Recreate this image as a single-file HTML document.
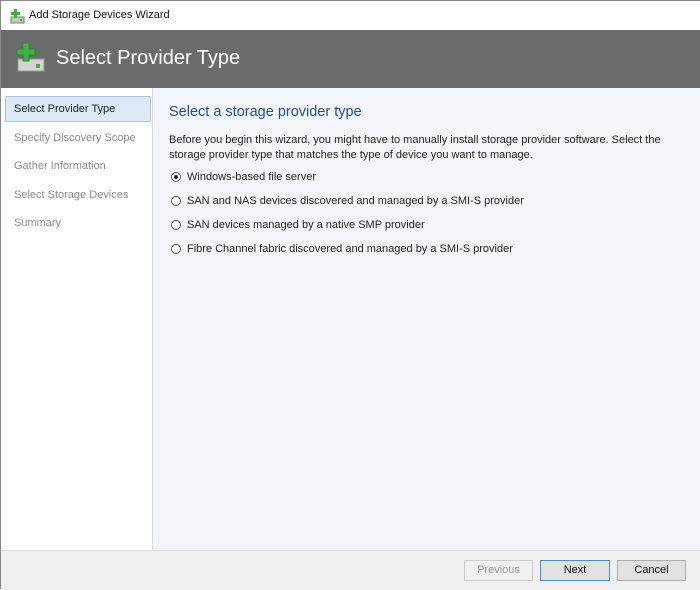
<!DOCTYPE html>
<html><head><style>
*{margin:0;padding:0;box-sizing:border-box}
body{width:700px;height:589px;overflow:hidden;font-family:"Liberation Sans",sans-serif;font-size:11px;background:#fff;position:relative;border:1px solid #888}
.abs{position:absolute}
.title{left:0;top:0;width:700px;height:29px;background:#fff}
.hdr{left:0;top:29px;width:700px;height:58px;background:#6b6b6b}
.left{left:0;top:87px;width:152px;height:462px;background:#fff;border-right:1px solid #d5d9de}
.main{left:153px;top:87px;width:547px;height:462px;background:#f2f5f9}
.foot{left:0;top:549px;width:700px;height:40px;background:#f0f0f0;border-top:1px solid #dcdcdc}
.nav{left:13px;color:#8a8a8a;font-size:11px}
.sel{left:4px;top:95px;width:146px;height:26px;background:#dde9f6;border:1px solid #a9c6e6;border-radius:2px;color:#222;padding:6px 0 0 8px}
.btn{top:559px;height:21px;border:1px solid #adadad;background:#e1e1e1;text-align:center;line-height:19px;color:#111}
.radio{width:10px;height:10px;border:1px solid #555;border-radius:50%;background:#fff;left:170px}
.opt{left:186px;color:#222}
</style></head><body>
<div class="abs title"></div>
<svg class="abs" style="left:8px;top:7px" width="16" height="16" viewBox="0 0 16 16"><rect x="2" y="9" width="13" height="6" fill="#c8c8c8" stroke="#777"/><rect x="11" y="11" width="2" height="2" fill="#3a3"/><path d="M5 1h3v3h3v3H8v3H5V7H2V4h3z" fill="#3db03d"/></svg>
<div class="abs" style="left:28px;top:8px;font-size:11px;color:#111">Add Storage Devices Wizard</div>
<div class="abs hdr"></div>
<svg class="abs" style="left:14px;top:41px" width="32" height="32" viewBox="0 0 32 32"><rect x="3" y="17" width="26" height="12" fill="#d4d4d4" stroke="#999"/><rect x="21" y="22" width="4" height="4" fill="#3fae3f"/><path d="M8 1h6v6h6v6h-6v6H8v-6H2V7h6z" fill="#41b341" stroke="#2a8a2a"/></svg>
<div class="abs" style="left:55px;top:46px;font-size:20px;color:#fff">Select Provider Type</div>
<div class="abs left"></div>
<div class="abs main"></div>
<div class="abs sel">Select Provider Type</div>
<div class="abs nav" style="top:131px">Specify Discovery Scope</div>
<div class="abs nav" style="top:159px">Gather Information</div>
<div class="abs nav" style="top:188px">Select Storage Devices</div>
<div class="abs nav" style="top:216px">Summary</div>
<div class="abs" style="left:168px;top:103px;font-size:14.5px;color:#1d4f91">Select a storage provider type</div>
<div class="abs" style="left:168px;top:132px;width:510px;line-height:15px;color:#222">Before you begin this wizard, you might have to manually install storage provider software. Select the storage provider type that matches the type of device you want to manage.</div>
<div class="abs radio" style="top:171px"><div style="width:4px;height:4px;background:#222;border-radius:50%;margin:2px"></div></div>
<div class="abs opt" style="top:170px">Windows-based file server</div>
<div class="abs radio" style="top:195px"></div>
<div class="abs opt" style="top:194px">SAN and NAS devices discovered and managed by a SMI-S provider</div>
<div class="abs radio" style="top:219px"></div>
<div class="abs opt" style="top:218px">SAN devices managed by a native SMP provider</div>
<div class="abs radio" style="top:243px"></div>
<div class="abs opt" style="top:242px">Fibre Channel fabric discovered and managed by a SMI-S provider</div>
<div class="abs foot"></div>
<div class="abs btn" style="left:463px;width:69px;color:#999;border-color:#ccc;background:#f0f0f0">Previous</div>
<div class="abs btn" style="left:539px;width:70px;border-color:#4a8fd6">Next</div>
<div class="abs btn" style="left:616px;width:69px">Cancel</div>
</body></html>
